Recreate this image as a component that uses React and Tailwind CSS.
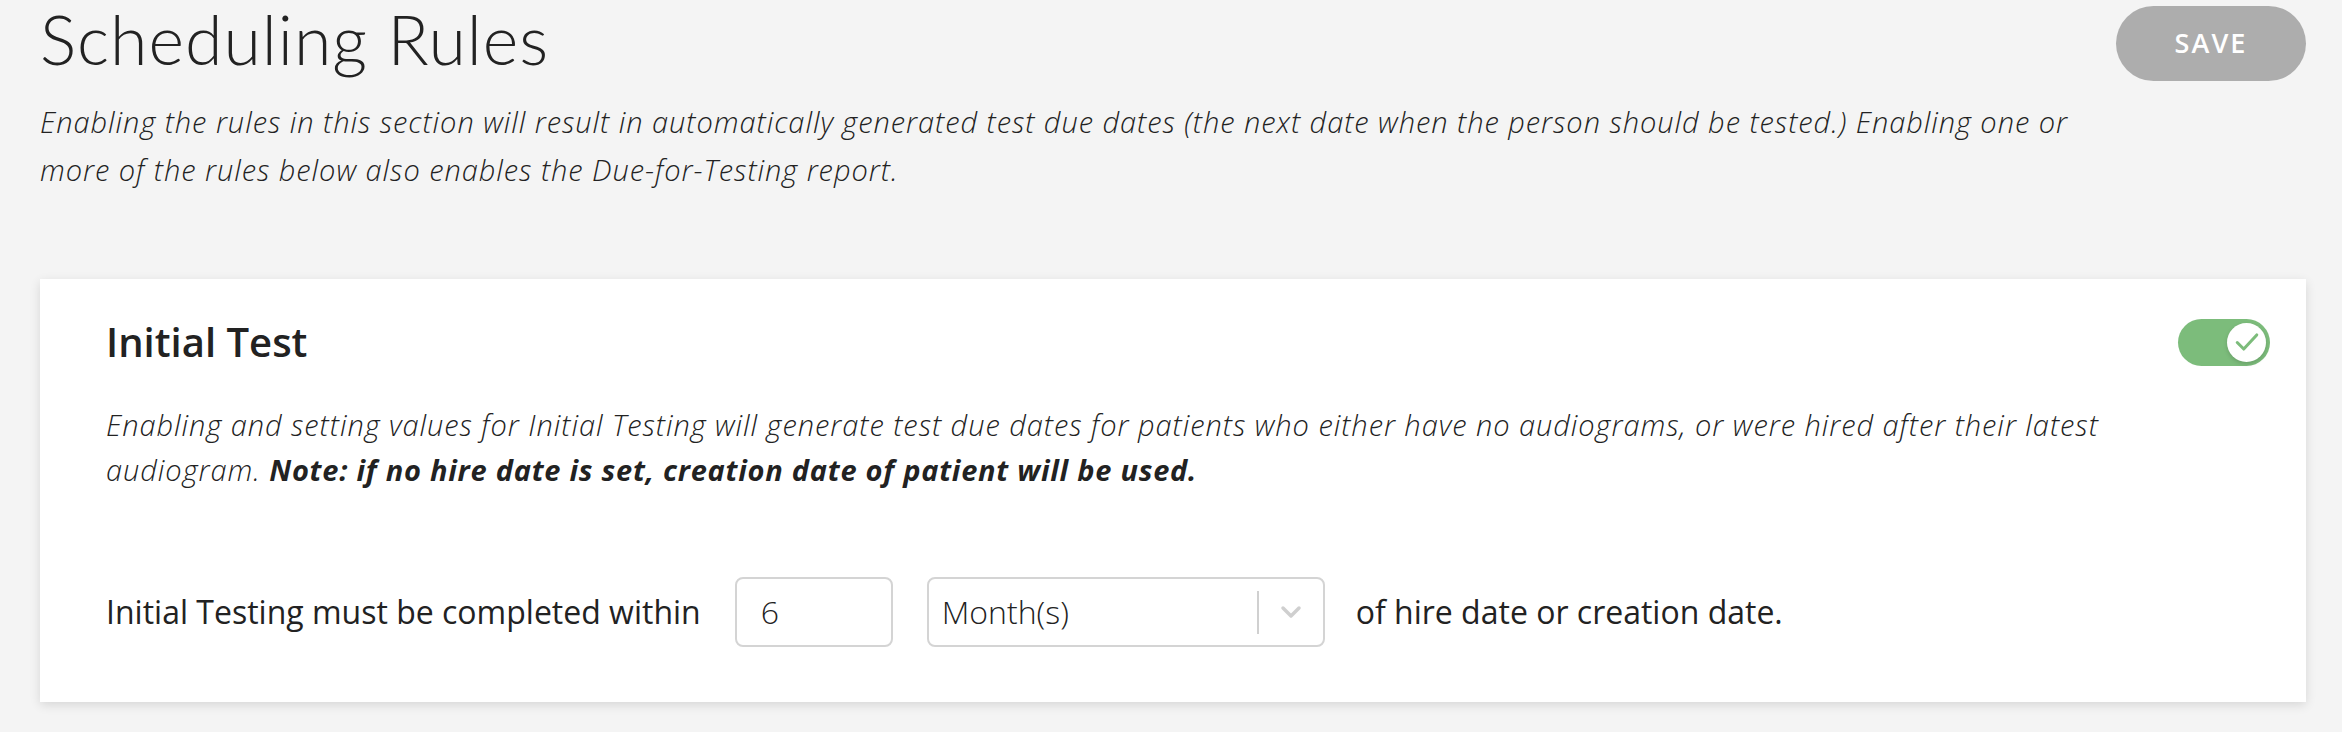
import React from "react";

function Toggle() {
  return (
    <div className="relative h-[47px] w-[92px] shrink-0 rounded-full bg-[#7cbc7b]">
      <div className="absolute right-[4px] top-[4px] flex h-[39px] w-[39px] items-center justify-center rounded-full bg-white shadow-[0_2px_4px_rgba(0,0,0,0.15)]">
        <svg width="26" height="26" viewBox="0 0 24 24" fill="none">
          <path d="M3 12.5l6 6L21 5.5" stroke="#7cbc7b" strokeWidth="2.8" strokeLinecap="round" strokeLinejoin="round" />
        </svg>
      </div>
    </div>
  );
}

export default function App() {
  const os = { fontFamily: '"Open Sans", "Liberation Sans", sans-serif' };
  return (
    <div className="min-h-screen bg-[#f4f4f4] pl-[40px] pr-[36px] text-[#222]" style={os}>
      <div className="flex items-start">
        <div className="min-w-0 flex-1">
          <h1
            className="text-[68px] font-light leading-[1.15] tracking-[1px] text-[#222]"
            style={{ fontFamily: 'Lato, "Open Sans", sans-serif' }}
          >
            Scheduling Rules
          </h1>
          <p className="mt-[20px] max-w-[2100px] text-[29px] font-light italic leading-[48px] tracking-[0.95px]">
            Enabling the rules in this section will result in automatically generated test due dates (the next date when the person should be tested.) Enabling one or more of the rules below also enables the Due-for-Testing report.
          </p>
        </div>
        <button className="mt-[6px] flex h-[75px] w-[190px] shrink-0 items-center justify-center rounded-full bg-[#adadad] text-[27px] font-semibold tracking-[0.08em] text-white">
          SAVE
        </button>
      </div>

      <div className="mt-[85px] bg-white pb-[55px] pl-[66px] pr-[36px] pt-[35px] shadow-[0_3px_10px_rgba(0,0,0,0.12)]">
        <div className="flex h-[56px] items-center justify-between">
          <h2 className="text-[40px] font-semibold leading-[48px]">Initial Test</h2>
          <Toggle />
        </div>
        <p className="mt-[32px] max-w-[2120px] text-[29px] font-light italic leading-[45px] tracking-[0.95px]">
          Enabling and setting values for Initial Testing will generate test due dates for patients who either have no audiograms, or were hired after their latest audiogram.{" "}
          <span className="font-bold tracking-[0.75px]">Note: if no hire date is set, creation date of patient will be used.</span>
        </p>
        <div className="mt-[85px] flex h-[70px] items-center">
          <span className="text-[32px] leading-none">Initial Testing must be completed within</span>
          <div className="ml-[34px] flex h-[70px] w-[158px] items-center rounded-[8px] border-2 border-[#d4d4d4] pl-[24px] text-[32px] font-light">
            6
          </div>
          <div className="ml-[34px] flex h-[70px] w-[398px] items-center rounded-[8px] border-2 border-[#d4d4d4] text-[32px] font-light">
            <span className="flex-1 pl-[13px]">Month(s)</span>
            <div className="h-[43px] w-[2px] bg-[#d0d0d0]" />
            <div className="flex w-[64px] items-center justify-center">
              <svg width="22" height="14" viewBox="0 0 22 14" fill="none">
                <path d="M3 3l8 8 8-8" stroke="#cfcfcf" strokeWidth="3.5" strokeLinecap="round" strokeLinejoin="round" />
              </svg>
            </div>
          </div>
          <span className="ml-[31px] text-[32px] leading-none">of hire date or creation date.</span>
        </div>
      </div>
    </div>
  );
}
